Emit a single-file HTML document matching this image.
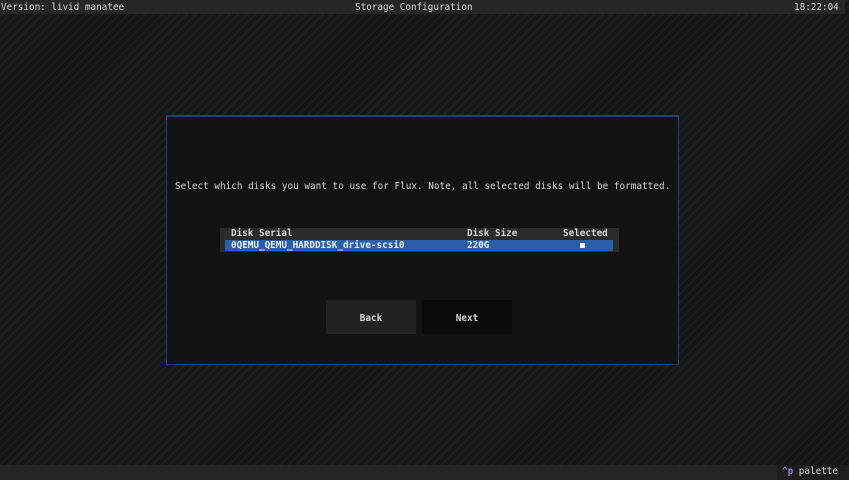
<!DOCTYPE html>
<html><head><style>
*{margin:0;padding:0;box-sizing:border-box}
body{width:849px;height:480px;overflow:hidden;position:relative;font-family:"DejaVu Sans Mono","Liberation Mono",monospace;font-size:9.3px;color:#d8d8d8;
background:#151515 repeating-linear-gradient(-45deg,#151515 0 4px,#1d1d1d 4px 6px);}
.abs{position:absolute;white-space:pre;line-height:12px}
#hdr{position:absolute;left:0;top:0;width:845px;height:14px;background:#262626}
#ftr{position:absolute;left:0;top:465px;width:849px;height:15px;background:#262626}
#dlg{position:absolute;left:166px;top:115px;width:513px;height:250px;background:#121212;border:1px solid #24416e;border-top:2px solid #24416e}
#tbl{position:absolute;left:220px;top:228px;width:399px;height:24px;background:#2a2a2a}
#row{position:absolute;left:225px;top:240px;width:388px;height:11px;background:#2a5fa8}
.btn{position:absolute;top:300px;width:90px;height:34px;text-align:center;line-height:34px;font-weight:bold;padding-top:2px}
</style></head><body>
<div id="hdr"></div>
<div class="abs" style="left:1px;top:2px">Version: livid manatee</div>
<div class="abs" style="left:355px;top:2px">Storage Configuration</div>
<div class="abs" style="left:794px;top:2px">18:22:04</div>
<div id="dlg"></div>
<div class="abs" style="left:175px;top:181px;letter-spacing:0.03px">Select which disks you want to use for Flux. Note, all selected disks will be formatted.</div>
<div id="tbl"></div>
<div id="row"></div>
<div class="abs" style="left:231px;top:228px;font-weight:bold">Disk Serial</div>
<div class="abs" style="left:467px;top:228px;font-weight:bold">Disk Size</div>
<div class="abs" style="left:563px;top:228px;font-weight:bold">Selected</div>
<div class="abs" style="left:231px;top:240px;font-weight:bold;color:#e8eef8">0QEMU_QEMU_HARDDISK_drive-scsi0</div>
<div class="abs" style="left:467px;top:240px;font-weight:bold;color:#e8eef8">220G</div>
<div style="position:absolute;left:580px;top:243px;width:5px;height:5px;background:#eee"></div>
<div class="btn" style="left:326px;background:#222">Back</div>
<div class="btn" style="left:422px;background:#0a0a0a">Next</div>
<div id="ftr"></div>
<div style="position:absolute;left:777px;top:465px;width:72px;height:15px;background:#1e1e1e"></div>
<div class="abs" style="left:782px;top:466px"><span style="color:#9a7fd0;font-weight:bold">^p</span> palette</div>
</body></html>
